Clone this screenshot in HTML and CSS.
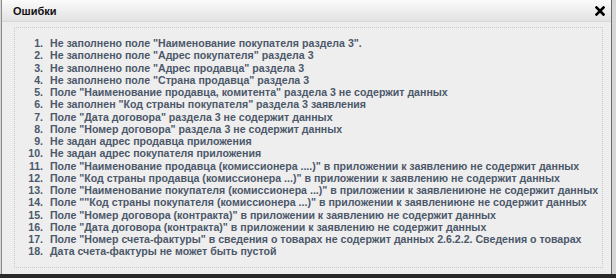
FILE: index.html
```html
<!DOCTYPE html>
<html lang="ru">
<head>
    <meta charset="UTF-8">
    <title>Ошибки</title>
    <link rel="stylesheet" href="styles.css">
</head>
<body>
    <!-- окно с ошибками -->
    <div class="dialog">
        <div class="dialog-title">
            <span class="title-text">Ошибки</span>
            <a class="close" href="javascript:;">
                <svg width="10" height="10" viewBox="0 0 10 10">
                    <path d="M1.5 1.5 L8.5 8.5 M8.5 1.5 L1.5 8.5" stroke="#000" stroke-width="2.6" stroke-linecap="square"/>
                </svg>
            </a>
        </div>
        <div class="dialog-body">
            <div class="errors">
                <ol>
                    <li>Не заполнено поле "Наименование покупателя раздела 3".</li>
                    <li>Не заполнено поле "Адрес покупателя" раздела 3</li>
                    <li>Не заполнено поле "Адрес продавца" раздела 3</li>
                    <li>Не заполнено поле "Страна продавца" раздела 3</li>
                    <li>Поле "Наименование продавца, комитента" раздела 3 не содержит данных</li>
                    <li>Не заполнен "Код страны покупателя" раздела 3 заявления</li>
                    <li>Поле "Дата договора" раздела 3 не содержит данных</li>
                    <li>Поле "Номер договора" раздела 3 не содержит данных</li>
                    <li>Не задан адрес продавца приложения</li>
                    <li>Не задан адрес покупателя приложения</li>
                    <li>Поле "Наименование продавца (комиссионера ....)" в приложении к заявлению не содержит данных</li>
                    <li>Поле "Код страны продавца (комиссионера ...)" в приложении к заявлению не содержит данных</li>
                    <li>Поле "Наименование покупателя (комиссионера ...)" в приложении к заявлениюне не содержит данных</li>
                    <li>Поле ""Код страны покупателя (комиссионера ...)" в приложении к заявлениюне не содержит данных</li>
                    <li>Поле "Номер договора (контракта)" в приложении к заявлению не содержит данных</li>
                    <li>Поле "Дата договора (контракта)" в приложении к заявлению не содержит данных</li>
                    <li>Поле "Номер счета-фактуры" в сведения о товарах не содержит данных 2.6.2.2. Сведения о товарах</li>
                    <li>Дата счета-фактуры не может быть пустой</li>
                </ol>
            </div>
        </div>
    </div>
    <!-- страница под окном -->
    <div class="page-under"></div>
</body>
</html>
```

FILE: styles.css
```css
* {
    margin: 0;
    padding: 0;
    box-sizing: border-box;
}

body {
    width: 616px;
    height: 278px;
    overflow: hidden;
    background-color: #d6d6d6;
    font-family: "Liberation Sans", Arial, sans-serif;
}

/* окно */
.dialog {
    width: 611px;
    height: 274px;
    margin-left: 1px;
    background-color: #eeeeee;
    border-left: 1px solid #8c8c8c;
    border-right: 1px solid #6a6a6a;
    display: flex;
    flex-direction: column;
}

/* заголовок */
.dialog-title {
    height: 22px;
    padding: 0 6px 0 11px;
    display: flex;
    align-items: center;
    justify-content: space-between;
    background: linear-gradient(#fbfbfb, #e2e2e2);
    border-bottom: 1px solid #d8d8d8;
}

.title-text {
    font-size: 11px;
    font-weight: bold;
    color: #111;
}

.close {
    display: flex;
    width: 10px;
    height: 10px;
    margin-top: 1px;
}

.dialog-body {
    flex: 1;
    padding: 5px 8px 5px 12px;
}

/* список ошибок */
.errors {
    height: 241px;
    border: 1px dotted #c9c9c9;
    padding: 9px 0 0 0;
}

.errors ol {
    padding-left: 31px;
    font-size: 10.6px;
    font-weight: bold;
    line-height: 12.25px;
    color: #4c586a;
    white-space: nowrap;
}

.errors li {
    padding-left: 4px;
}

.page-under {
    height: 4px;
    background-color: #2a2a2a;
}
```
